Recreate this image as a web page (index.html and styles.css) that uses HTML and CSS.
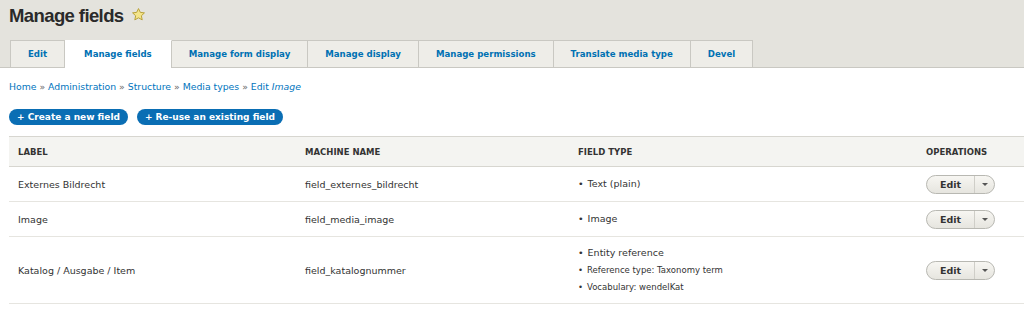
FILE: index.html
```html
<!DOCTYPE html>
<html lang="de">
<head>
  <meta charset="UTF-8">
  <title>Manage fields</title>
  <link rel="stylesheet" href="styles.css">
</head>
<body>
  <header class="page-head">
    <h1>Manage fields
      <svg class="star" width="15" height="15" viewBox="0 0 24 24"><path d="M12 2.5l2.9 6.1 6.6.8-4.9 4.6 1.3 6.6L12 17.3l-5.9 3.3 1.3-6.6-4.9-4.6 6.6-.8z" fill="#f4e58a" stroke="#b9a23a" stroke-width="1.6" stroke-linejoin="round"/></svg>
    </h1>
    <nav class="tabs">
      <a href="#">Edit</a>
      <a href="#" class="active">Manage fields</a>
      <a href="#">Manage form display</a>
      <a href="#">Manage display</a>
      <a href="#">Manage permissions</a>
      <a href="#">Translate media type</a>
      <a href="#">Devel</a>
    </nav>
  </header>

  <main class="content">
    <div class="breadcrumb">
      <a href="#">Home</a> <span class="sep">&raquo;</span>
      <a href="#">Administration</a> <span class="sep">&raquo;</span>
      <a href="#">Structure</a> <span class="sep">&raquo;</span>
      <a href="#">Media types</a> <span class="sep">&raquo;</span>
      <a href="#">Edit <em>Image</em></a>
    </div>

    <div class="actions">
      <a href="#" class="action">+ Create a new field</a>
      <a href="#" class="action">+ Re-use an existing field</a>
    </div>

    <table class="fields">
      <thead>
        <tr>
          <th class="c-label">Label</th>
          <th class="c-machine">Machine name</th>
          <th class="c-type">Field type</th>
          <th>Operations</th>
        </tr>
      </thead>
      <tbody>
        <tr>
          <td>Externes Bildrecht</td>
          <td>field_externes_bildrecht</td>
          <td><ul class="type"><li>Text (plain)</li></ul></td>
          <td><div class="dropbutton"><span class="main">Edit</span><span class="toggle"></span></div></td>
        </tr>
        <tr>
          <td>Image</td>
          <td>field_media_image</td>
          <td><ul class="type"><li>Image</li></ul></td>
          <td><div class="dropbutton"><span class="main">Edit</span><span class="toggle"></span></div></td>
        </tr>
        <tr class="tall">
          <td>Katalog / Ausgabe / Item</td>
          <td>field_katalognummer</td>
          <td>
            <ul class="type">
              <li>Entity reference</li>
              <li class="sub">Reference type: Taxonomy term</li>
              <li class="sub">Vocabulary: wendelKat</li>
            </ul>
          </td>
          <td><div class="dropbutton"><span class="main">Edit</span><span class="toggle"></span></div></td>
        </tr>
      </tbody>
    </table>
  </main>
</body>
</html>
```

FILE: styles.css
```css
* {
  margin: 0; padding: 0; box-sizing: border-box;
}
body {
  font-family: "DejaVu Sans", Verdana, sans-serif;
  font-size: 9.5px;
  color: #333;
  background: #fff;
  overflow: hidden;
}
a { text-decoration: none; color: #0074bd; }

.page-head {
  background: #e4e3dd;
  padding: 5px 0 0 9px;
  border-bottom: 1px solid #c9c8c2;
}
.page-head h1 {
  font-family: "Liberation Sans", Arial, sans-serif;
  font-size: 18.5px;
  font-weight: bold;
  color: #2a2a2a;
  line-height: 21px;
  letter-spacing: -0.6px;
  height: 35px;
  display: flex;
  align-items: flex-start;
  gap: 7px;
}
.star { margin-top: 2px; }

.tabs {
  display: flex;
  margin-left: 1px;
}
.tabs a {
  height: 27px;
  line-height: 27px;
  padding: 0 17px;
  font-weight: bold;
  font-size: 8.6px;
  background: #eeede8;
  border: 1px solid #c9c8c2;
  border-bottom: none;
  margin-bottom: -1px;
  border-left: none;
  color: #0071b3;
}
.tabs a:first-child { border-left: 1px solid #c9c8c2; }
.tabs a.active {
  background: #fff;
  height: 28px;
  padding: 0 19px;
  border-top-color: #fff;
}

.content { padding: 0 0 0 9px; }

.breadcrumb {
  margin-top: 12px;
  line-height: 14px;
  font-size: 9.3px;
}
.breadcrumb .sep { color: #666; }

.actions {
  display: flex;
  gap: 9px;
  margin-top: 15px;
}
.action {
  background: #0a6eb4;
  color: #fff;
  font-weight: bold;
  font-size: 9px;
  border-radius: 9px;
  padding: 0 8px;
  height: 16px;
  line-height: 16px;
}

.fields {
  margin-top: 11px;
  width: 1015px;
  border-collapse: collapse;
  border-top: 1px solid #d7d6d0;
}
.fields th {
  text-align: left;
  background: #f4f4f1;
  text-transform: uppercase;
  font-size: 8.5px;
  font-weight: bold;
  color: #333;
  height: 30px;
  padding-left: 9px;
  border-bottom: 1px solid #d7d6d0;
}
.c-label { width: 287px; }
.c-machine { width: 273px; }
.c-type { width: 348px; }
.fields td {
  height: 35px;
  padding-left: 9px;
  border-bottom: 1px solid #e6e5e0;
  vertical-align: middle;
}
.fields tr.tall td { height: 67px; }

.type { list-style: none; }
.type li { line-height: 18px; }
.type li::before {
  content: "\2022";
  margin-right: 4px;
}
.type li.sub { font-size: 8.5px; line-height: 17px; }

.dropbutton {
  display: flex;
  width: 69px;
  height: 19px;
  border: 1px solid #b8b8b2;
  border-radius: 10px;
  background: linear-gradient(#f7f6f2, #e6e5df);
  overflow: hidden;
}
.dropbutton .main {
  width: 48px;
  text-align: center;
  line-height: 17px;
  font-weight: bold;
  color: #333;
  border-right: 1px solid #cfcec8;
}
.dropbutton .toggle {
  flex: 1;
  position: relative;
}
.dropbutton .toggle::after {
  content: "";
  position: absolute;
  left: 7px; top: 7px;
  border: 3px solid transparent;
  border-top: 3px solid #555;
}
```
